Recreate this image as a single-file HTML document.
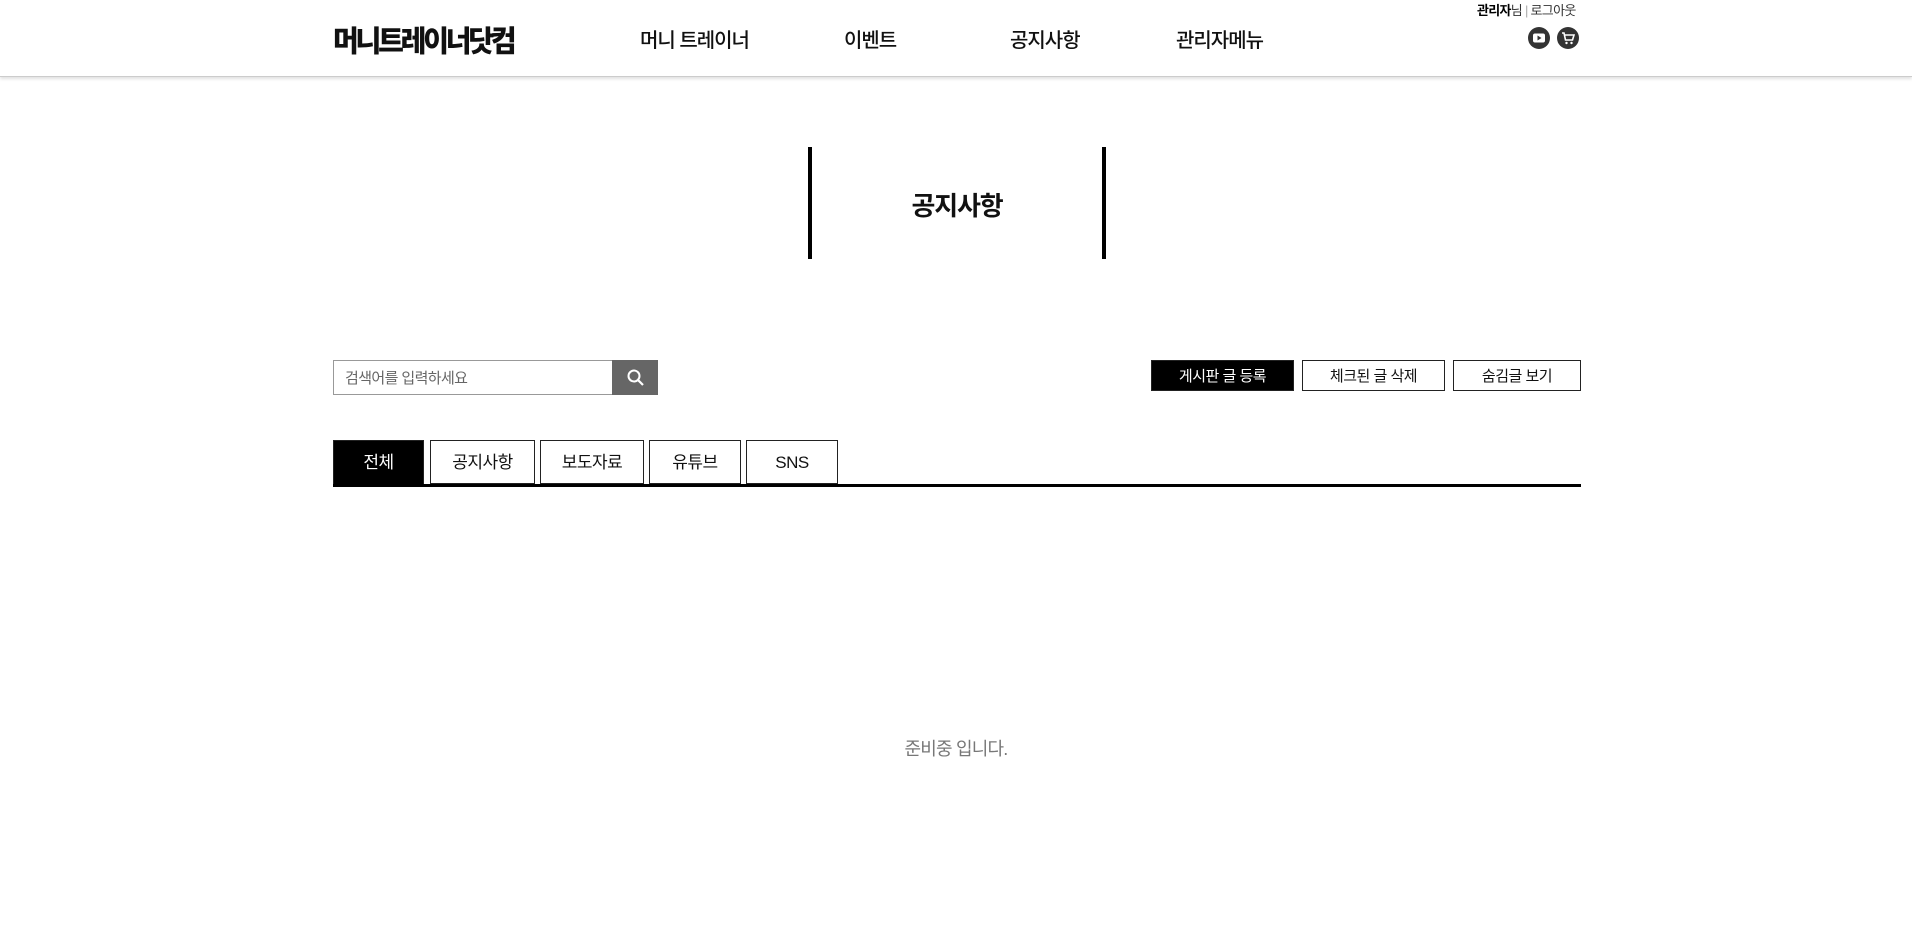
<!DOCTYPE html>
<html><head><meta charset="utf-8"><style>
*{margin:0;padding:0;box-sizing:border-box}
body{width:1912px;height:937px;background:#fff;font-family:"Liberation Sans","Noto Sans CJK KR",sans-serif;color:#111;position:relative;overflow:hidden}
.a{position:absolute}
header{position:absolute;left:0;top:0;width:1912px;height:77px;border-bottom:1px solid #ccc;box-shadow:0 2px 3px rgba(0,0,0,.12)}
.nav{position:absolute;top:24px;font-size:20px;font-weight:500;color:#111;letter-spacing:-1px}
.btn{position:absolute;top:360px;height:31px;border:1px solid #222;font-size:15px;text-align:center;line-height:31px;letter-spacing:-0.5px}
.tab{position:absolute;top:440px;height:44px;border:1px solid #222;font-size:17px;text-align:center;line-height:44px;letter-spacing:-0.5px}
</style></head><body>
<header>
<div class="a" style="left:333px;top:20px;font-size:28px;font-weight:900;letter-spacing:-3.2px;transform:scaleY(1.05)">머니트레이너닷컴</div>
<div class="nav" style="left:640px">머니 트레이너</div>
<div class="nav" style="left:844px">이벤트</div>
<div class="nav" style="left:1010px">공지사항</div>
<div class="nav" style="left:1176px">관리자메뉴</div>
<div class="a" style="left:1477px;top:0px;font-size:13px;color:#333;letter-spacing:-0.7px"><b style="color:#000">관리자</b>님 <span style="color:#aaa">|</span> 로그아웃</div>
<svg class="a" style="left:1528px;top:27px" width="22" height="22" viewBox="0 0 22 22"><circle cx="11" cy="11" r="11" fill="#333"/><rect x="5" y="6.5" width="12" height="9" rx="2" fill="#fff"/><path d="M9.5 8.5v5l4-2.5z" fill="#333"/></svg>
<svg class="a" style="left:1557px;top:27px" width="22" height="22" viewBox="0 0 22 22"><circle cx="11" cy="11" r="11" fill="#333"/><path d="M5 6h2l1.5 7h7l1.5-5H8" fill="none" stroke="#fff" stroke-width="1.6"/><circle cx="9.5" cy="16" r="1.2" fill="#fff"/><circle cx="14.5" cy="16" r="1.2" fill="#fff"/></svg>
</header>
<div class="a" style="left:808px;top:147px;width:4px;height:112px;background:#000"></div>
<div class="a" style="left:1102px;top:147px;width:4px;height:112px;background:#000"></div>
<div class="a" style="left:812px;top:186px;width:290px;text-align:center;font-size:26px;font-weight:700;letter-spacing:-1.2px">공지사항</div>
<div class="a" style="left:333px;top:360px;width:280px;height:35px;border:1px solid #999;font-size:15px;color:#666;padding:9px 11px;line-height:18px;letter-spacing:-0.6px">검색어를 입력하세요</div>
<div class="a" style="left:612px;top:360px;width:46px;height:35px;background:#666"></div>
<svg class="a" style="left:626px;top:368px" width="20" height="20" viewBox="0 0 20 20"><circle cx="8" cy="8" r="5.5" fill="none" stroke="#fff" stroke-width="2"/><path d="M12 12l5 5" stroke="#fff" stroke-width="2.2"/></svg>
<div class="btn" style="left:1151px;width:143px;background:#000;color:#fff">게시판 글 등록</div>
<div class="btn" style="left:1302px;width:143px">체크된 글 삭제</div>
<div class="btn" style="left:1453px;width:128px">숨김글 보기</div>
<div class="tab" style="left:333px;width:91px;background:#000;color:#fff;height:46px">전체</div>
<div class="tab" style="left:430px;width:105px">공지사항</div>
<div class="tab" style="left:540px;width:104px">보도자료</div>
<div class="tab" style="left:649px;width:92px">유튜브</div>
<div class="tab" style="left:746px;width:92px">SNS</div>
<div class="a" style="left:333px;top:484px;width:1248px;height:3px;background:#000"></div>
<div class="a" style="left:756px;top:735px;width:400px;text-align:center;font-size:18px;color:#777;letter-spacing:-0.8px">준비중 입니다.</div>
</body></html>
